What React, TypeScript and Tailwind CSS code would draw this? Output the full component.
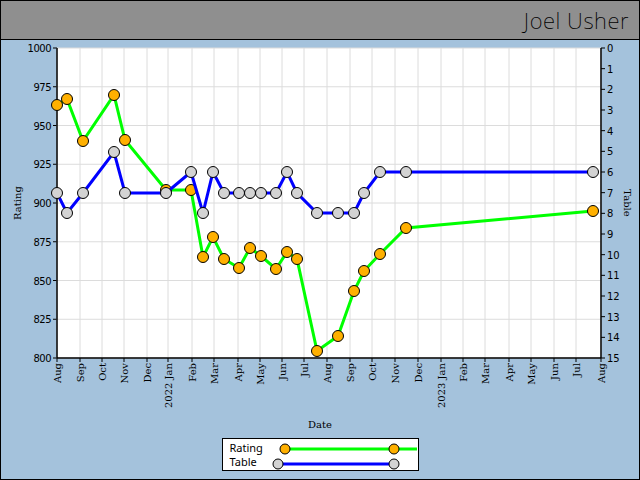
import React from 'react';

const months = ['Aug', 'Sep', 'Oct', 'Nov', 'Dec', '2022 Jan', 'Feb', 'Mar', 'Apr', 'May', 'Jun', 'Jul', 'Aug', 'Sep', 'Oct', 'Nov', 'Dec', '2023 Jan', 'Feb', 'Mar', 'Apr', 'May', 'Jun', 'Jul', 'Aug'];
const monthX = [57, 80, 102, 124, 147, 168, 192, 214, 238, 260, 282, 304, 327, 350, 372, 395, 418, 441, 463, 485, 509, 531, 554, 576, 601];

const rating: [number, number][] = [[57,105],[67,99],[83,141],[114,95],[125,140],[166,190],[191,190],[203,257],[213,237],[224,259],[239,268],[250,248],[261,256],[276,269],[287,252],[297,259],[317,351],[338,336],[354,291],[364,271],[380,254],[406,228],[593,211]];
const table: [number, number][] = [[57,193],[67,213],[83,193],[114,152],[125,193],[166,193],[191,172],[203,213],[213,172],[224,193],[239,193],[250,193],[261,193],[276,193],[287,172],[297,193],[317,213],[338,213],[354,213],[364,193],[380,172],[406,172],[593,172]];

const top = 48;
const bottom = 358;
const ratingTicks = [1000, 975, 950, 925, 900, 875, 850, 825, 800];

const Series = ({ pts, line, fill }: { pts: [number, number][]; line: string; fill: string }) => (
  <g>
    <polyline points={pts.map(p => p.join(',')).join(' ')} fill="none" stroke={line} strokeWidth={3} />
    {pts.map(([x, y], i) => (
      <circle key={i} cx={x} cy={y} r={5.5} fill={fill} stroke="#000" strokeWidth={1} />
    ))}
  </g>
);

export default function App() {
  return (
    <div className="w-[640px] h-[480px] border border-black bg-[#a4c2dc] flex flex-col overflow-hidden">
      <div className="h-[39px] bg-[#8f8f8f] border-b border-black flex items-center justify-end pr-[10px]">
        <span className="text-[22px] text-black font-['DejaVu_Sans'] font-extralight tracking-wide">Joel Usher</span>
      </div>
      <svg width={638} height={394} className="block">
        <g transform="translate(-1,-40)" fontFamily="'DejaVu Serif', serif" fontSize={10} fill="#000">
          <rect x={57} y={top} width={544} height={bottom - top} fill="#fff" />
          {ratingTicks.map((v, i) => {
            const y = top + i * 38.75;
            return (
              <g key={v}>
                <line x1={57} x2={601} y1={y} y2={y} stroke="#dcdcdc" />
                <line x1={53} x2={57} y1={y} y2={y} stroke="#000" />
                <text x={51} y={y + 4} textAnchor="end" fontFamily="'DejaVu Sans', sans-serif" letterSpacing={-0.5}>{v}</text>
              </g>
            );
          })}
          {monthX.map((x, i) => (
            <g key={i}>
              <line x1={x} x2={x} y1={top} y2={bottom} stroke="#dcdcdc" />
              <line x1={x} x2={x} y1={bottom} y2={bottom + 4} stroke="#000" />
              <text transform={`translate(${x + 4},${bottom + 5}) rotate(-90)`} textAnchor="end">{months[i]}</text>
            </g>
          ))}
          {Array.from({ length: 16 }, (_, i) => {
            const y = top + i * (310 / 15);
            return (
              <g key={i}>
                <line x1={601} x2={605} y1={y} y2={y} stroke="#000" />
                <text x={607} y={y + 4} fontFamily="'DejaVu Sans', sans-serif">{i}</text>
              </g>
            );
          })}
          <line x1={57} x2={57} y1={top} y2={bottom} stroke="#000" strokeWidth={1.5} />
          <line x1={601} x2={601} y1={top} y2={bottom} stroke="#000" strokeWidth={1.5} />
          <line x1={57} x2={601} y1={bottom} y2={bottom} stroke="#000" strokeWidth={1.5} />
          <Series pts={rating} line="#00ff00" fill="#ffb000" />
          <Series pts={table} line="#0000ff" fill="#d3d3d3" />
          <text transform="translate(21,203) rotate(-90)" textAnchor="middle">Rating</text>
          <text transform="translate(624,203) rotate(90)" textAnchor="middle">Table</text>
          <text x={320} y={428} textAnchor="middle">Date</text>
        </g>
      </svg>
      <div className="self-center mt-[4px] ml-[0px] w-[197px] h-[33px] bg-white border border-black flex items-center pl-[7px] font-['DejaVu_Serif'] text-[11px] leading-[14px]">
        <div className="flex flex-col">
          <span>Rating</span>
          <span>Table</span>
        </div>
        <svg width={150} height={30} className="ml-[4px]">
          <line x1={18} x2={178} y1={9} y2={9} stroke="#00ff00" strokeWidth={3} />
          <line x1={11} x2={126} y1={24} y2={24} stroke="#0000ff" strokeWidth={3} />
          <circle cx={18} cy={9} r={5} fill="#ffb000" stroke="#000" />
          <circle cx={127} cy={9} r={5} fill="#ffb000" stroke="#000" />
          <circle cx={11} cy={24} r={5} fill="#d3d3d3" stroke="#000" />
          <circle cx={127} cy={24} r={5} fill="#d3d3d3" stroke="#000" />
        </svg>
      </div>
    </div>
  );
}
